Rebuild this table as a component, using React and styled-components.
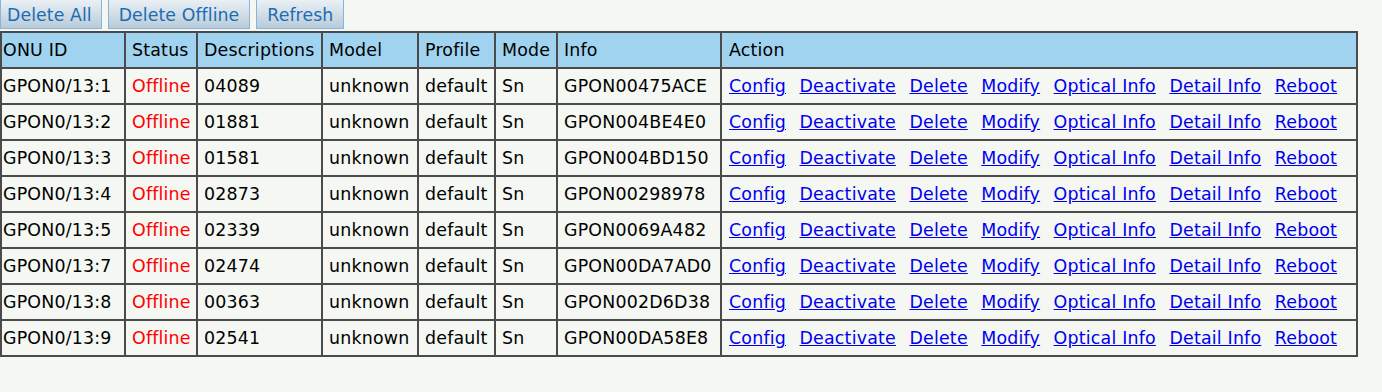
import React from "react";
import styled, { createGlobalStyle } from "styled-components";

const Global = createGlobalStyle`
  html, body { margin: 0; padding: 0; background: #f5f7f2; }
  body { font-family: "DejaVu Sans", Verdana, sans-serif; font-size: 17.4px; letter-spacing: 0.2px; }
`;

const Page = styled.div`
  display: flex;
  flex-direction: column;
  align-items: flex-start;
`;

const Toolbar = styled.div`
  display: flex;
  gap: 6px;
  height: 29px;
`;

const ToolButton = styled.button`
  height: 29px;
  padding: 2px 10px 0;
  margin: 0;
  border: 1px solid #86b4dc;
  border-top: none;
  background: linear-gradient(#eaf0f4, #b9cbd9);
  color: #1c6cb4;
  font-family: "DejaVu Sans", Verdana, sans-serif;
  font-size: 17.3px;
  letter-spacing: 0.1px;
  line-height: 27px;
  cursor: pointer;
  &:first-child { padding-left: 6px; padding-right: 9px; }
`;

const Table = styled.table`
  border-collapse: collapse;
  table-layout: fixed;
  width: 1356px;
  margin: 2px 0 0 0;
  border: 2px solid #4b4b4b;
`;

const HeadCell = styled.th`
  background: #a0d3ef;
  color: #000;
  font-weight: normal;
  text-align: left;
  height: 34px;
  padding: 0 0 0 ${(p) => (p.$wide ? 7 : 6)}px;
  border: 2px solid #4b4b4b;
  white-space: nowrap;
  &:first-child { padding-left: 1px; }
`;

const Cell = styled.td`
  height: 34px;
  padding: 0 0 0 ${(p) => (p.$wide ? 7 : 6)}px;
  border: 2px solid #4b4b4b;
  color: ${(p) => (p.$offline ? "#ff0000" : "#000")};
  white-space: nowrap;
  overflow: hidden;
  &:first-child { padding-left: 1px; }
`;

const Actions = styled.div`
  display: flex;
  gap: 13.5px;
`;

const Link = styled.a`
  color: #0000ee;
  text-decoration: underline;
  cursor: pointer;
`;

const cols = [124, 72, 125, 96, 77, 62, 164, 636];
const headers = ["ONU ID", "Status", "Descriptions", "Model", "Profile", "Mode", "Info", "Action"];
const rows = [
  ["GPON0/13:1", "04089", "GPON00475ACE"],
  ["GPON0/13:2", "01881", "GPON004BE4E0"],
  ["GPON0/13:3", "01581", "GPON004BD150"],
  ["GPON0/13:4", "02873", "GPON00298978"],
  ["GPON0/13:5", "02339", "GPON0069A482"],
  ["GPON0/13:7", "02474", "GPON00DA7AD0"],
  ["GPON0/13:8", "00363", "GPON002D6D38"],
  ["GPON0/13:9", "02541", "GPON00DA58E8"],
];
const actions = ["Config", "Deactivate", "Delete", "Modify", "Optical Info", "Detail Info", "Reboot"];

export default function App() {
  return (
    <Page>
      <Global />
      <Toolbar>
        <ToolButton>Delete All</ToolButton>
        <ToolButton>Delete Offline</ToolButton>
        <ToolButton>Refresh</ToolButton>
      </Toolbar>
      <Table>
        <colgroup>
          {cols.map((w, i) => (
            <col key={i} style={{ width: w }} />
          ))}
        </colgroup>
        <thead>
          <tr>
            {headers.map((h) => (
              <HeadCell key={h} $wide={h === "Action"}>{h}</HeadCell>
            ))}
          </tr>
        </thead>
        <tbody>
          {rows.map(([id, desc, info]) => (
            <tr key={id}>
              <Cell>{id}</Cell>
              <Cell $offline>Offline</Cell>
              <Cell>{desc}</Cell>
              <Cell>unknown</Cell>
              <Cell>default</Cell>
              <Cell>Sn</Cell>
              <Cell>{info}</Cell>
              <Cell $wide>
                <Actions>
                  {actions.map((a) => (
                    <Link key={a}>{a}</Link>
                  ))}
                </Actions>
              </Cell>
            </tr>
          ))}
        </tbody>
      </Table>
    </Page>
  );
}
